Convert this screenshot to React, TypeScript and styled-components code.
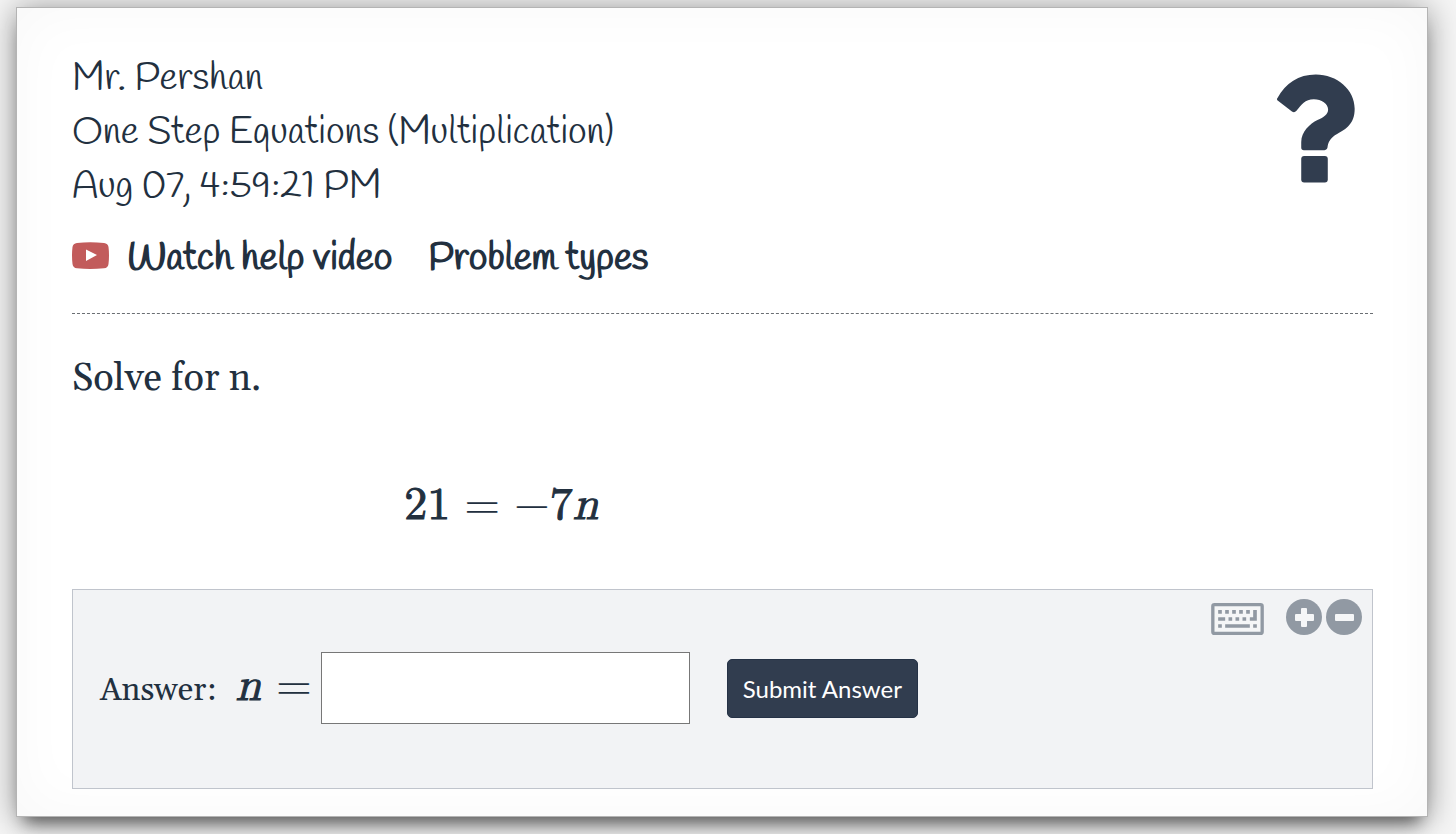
import React, { useState } from "react";
import styled, { createGlobalStyle } from "styled-components";

const ink = "#22303f";
const navy = "#313d4f";
const grey = "#9199a3";
const hand = `"Handlee", Lato, "Open Sans", sans-serif`;
const serif = `Gelasio, "Liberation Serif", serif`;
const math = `KaTeX_Main, "Latin Modern Math", "Liberation Serif", serif`;
const mathItalic = `KaTeX_Math, ${math}`;

const GlobalStyle = createGlobalStyle`
  * { box-sizing: border-box; }
  body {
    margin: 0;
    background: #f5f5f5;
    color: ${ink};
    font-family: ${serif};
  }
  #root { display: flow-root; overflow: hidden; }
`;

const Sheet = styled.main`
  margin: 7px 28px 17px 16px;
  padding: 44px 54px 27px 55px;
  border: 1px solid #b4b4b4;
  background: #fff;
  box-shadow:
    0 14px 16px -8px rgba(0, 0, 0, 0.5),
    0 2px 30px rgba(0, 0, 0, 0.4),
    inset 0 0 60px rgba(0, 0, 0, 0.03);
`;

const Header = styled.header`
  display: flex;
  justify-content: space-between;
  align-items: flex-start;
  padding-bottom: 27px;
  border-bottom: 1px dashed #6a6e73;
`;

const Details = styled.div`
  font-family: ${hand};
  font-size: 38px;
  line-height: 54px;
`;

const Line = styled.p`
  margin: 0;
`;

const Links = styled.nav`
  display: flex;
  align-items: center;
  gap: 36px;
  margin-top: 18px;
`;

const HelpLink = styled.a`
  display: flex;
  align-items: center;
  gap: 18px;
  color: ${ink};
  font-weight: 700;
  text-decoration: none;
`;

const VideoBadge = styled.svg`
  width: 37px;
  height: 27px;
  margin-bottom: 8px;
`;

const Status = styled.svg`
  flex: none;
  width: 78px;
  height: 109px;
  margin: 22px 18px 0 0;
`;

const Prompt = styled.p`
  margin: 37px 0 0;
  font-size: 38px;
  line-height: 56px;
`;

const Equation = styled.div`
  display: flex;
  justify-content: center;
  width: 66%;
  margin: 66px 0 52px;
  font-family: ${math};
  font-size: 46px;
  line-height: 64px;
  -webkit-text-stroke: 1px ${ink};
`;

const Operator = styled.span<{ $spaced?: boolean }>`
  margin: 0 ${(p) => (p.$spaced ? 14 : 0)}px;
  font-family: ${math};
  font-size: 46px;
  -webkit-text-stroke: 0;
`;

const Variable = styled.i`
  font-family: ${mathItalic};
  font-size: 46px;
  -webkit-text-stroke: 1px ${ink};
`;

const Panel = styled.section`
  padding: 9px 10px 64px 27px;
  border: 1px solid #c0c4cc;
  background: #f2f3f5;
`;

const Tools = styled.div`
  display: flex;
  justify-content: flex-end;
  align-items: center;
  gap: 4px;
`;

const ToolButton = styled.button<{ $gapAfter?: boolean }>`
  display: flex;
  margin: 0 ${(p) => (p.$gapAfter ? 18 : 0)}px 0 0;
  padding: ${(p) => (p.$gapAfter ? 4 : 0)}px 0 0;
  border: 0;
  background: none;
  cursor: pointer;
`;

const AnswerForm = styled.form`
  display: flex;
  align-items: center;
  margin-top: 17px;
`;

const AnswerLabel = styled.label`
  display: flex;
  align-items: baseline;
  font-size: 32px;
  line-height: 64px;
`;

const LabelVariable = styled(Variable)`
  margin: 0 15px 0 19px;
`;

const AnswerInput = styled.input`
  width: 369px;
  height: 72px;
  margin-left: 9px;
  padding: 0 12px;
  border: 1px solid #777;
  background: #fff;
  color: ${ink};
  font: 32px ${serif};
`;

const Submit = styled.button`
  height: 59px;
  margin-left: 37px;
  padding: 0 15px;
  border: 1px solid #253246;
  border-radius: 5px;
  background: ${navy};
  color: #fff;
  font: 24px Lato, sans-serif;
  cursor: pointer;
`;

function QuestionMark() {
  return (
    <Status viewBox="81 41 235 327" role="img" aria-label="Unanswered">
      <g fill={navy}>
        <path d="M82 113C108 68 145 42 198 42C262 42 315 88 315 145C315 190 290 206 262 221C243 231 236 245 234 256Q233 270 224 270H162Q154 270 154 262V245C154 215 180 190 203 179C222 170 235 162 235 147C235 130 215 116 192 116C165 116 155 132 139 152Q133 158 126 153L84 121Q79 117 82 113Z" />
        <rect x="154" y="287" width="80" height="80" rx="9" />
      </g>
    </Status>
  );
}

function VideoIcon() {
  return (
    <VideoBadge viewBox="0 0 37 27" aria-hidden="true">
      <path
        d="M5 1Q18 -0.5 32 1Q36 1.500 36.500 5Q37.500 13 36.500 22Q36 26 32 26.300Q18 27.500 5 26.300Q1 26 .5 22Q-.5 13 .5 5Q1 1.500 5 1Z"
        fill="#c25b5b"
      />
      <path d="M14 7.500V19L25 13Z" fill="#fff" />
    </VideoBadge>
  );
}

function KeyboardIcon() {
  return (
    <svg width="53" height="32" viewBox="64 70 158 96" aria-hidden="true">
      <rect x="69" y="75" width="148" height="86" rx="5" fill="#f5f6f7" stroke={grey} strokeWidth="10" />
      <path
        fill={grey}
        d="M85 91h11v11h-11zM106 91h11v11h-11zM127 91h11v11h-11zM148 91h11v11h-11zM169 91h11v11h-11zM190 91h11v32h-21v-10h10zM85 113h21v10h-21zM116 113h11v10h-11zM137 113h11v10h-11zM158 113h11v10h-11zM85 134h11v10h-11zM106 134h74v10h-74zM190 134h11v10h-11z"
      />
    </svg>
  );
}

function RoundIcon({ plus }: { plus?: boolean }) {
  return (
    <svg width="36" height="36" viewBox="0 0 36 36" aria-hidden="true">
      <circle cx="18" cy="18" r="18" fill={grey} />
      <g fill="#f5f6f7">
        <rect x="9" y="15" width="19" height="7" rx="1" />
        {plus && <rect x="15" y="9" width="6" height="19" rx="1" />}
      </g>
    </svg>
  );
}

export default function App() {
  const [answer, setAnswer] = useState("");
  return (
    <>
      <GlobalStyle />
      <Sheet>
        <Header>
          <Details>
            <Line>Mr. Pershan</Line>
            <Line>One Step Equations (Multiplication)</Line>
            <Line>Aug 07, 4:59:21 PM</Line>
            <Links>
              <HelpLink href="#video">
                <VideoIcon />
                Watch help video
              </HelpLink>
              <HelpLink href="#types">Problem types</HelpLink>
            </Links>
          </Details>
          <QuestionMark />
        </Header>
        <Prompt>Solve for n.</Prompt>
        <Equation>
          <span>21</span>
          <Operator $spaced>=</Operator>
          <Operator>−</Operator>
          <span>7</span>
          <Variable>n</Variable>
        </Equation>
        <Panel>
          <Tools>
            <ToolButton type="button" aria-label="Keyboard" $gapAfter>
              <KeyboardIcon />
            </ToolButton>
            <ToolButton type="button" aria-label="Larger">
              <RoundIcon plus />
            </ToolButton>
            <ToolButton type="button" aria-label="Smaller">
              <RoundIcon />
            </ToolButton>
          </Tools>
          <AnswerForm onSubmit={(e) => e.preventDefault()}>
            <AnswerLabel htmlFor="answer">
              Answer: <LabelVariable>n</LabelVariable>
              <Operator>=</Operator>
            </AnswerLabel>
            <AnswerInput id="answer" value={answer} onChange={(e) => setAnswer(e.target.value)} />
            <Submit type="submit">Submit Answer</Submit>
          </AnswerForm>
        </Panel>
      </Sheet>
    </>
  );
}
